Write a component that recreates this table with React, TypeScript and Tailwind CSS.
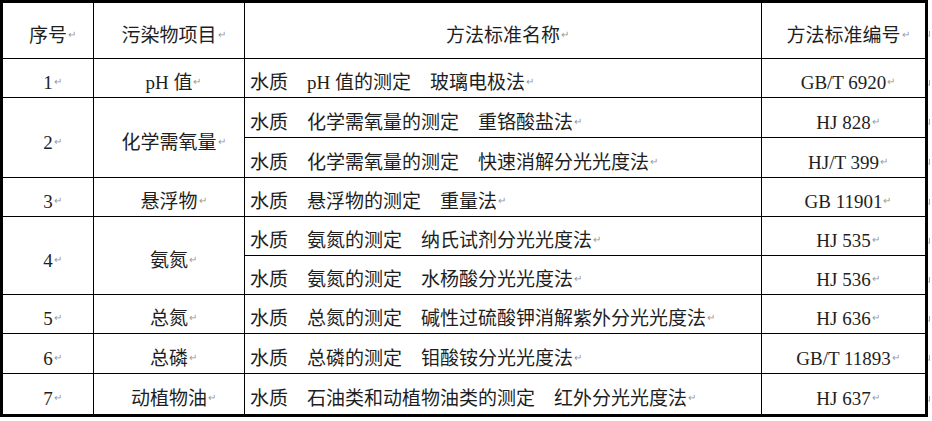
import type { ReactNode } from "react";

type Method = { name: string; code: string };

type Item = {
  no: string;
  item: string;
  methods: Method[];
};

const items: Item[] = [
  { no: "1", item: "pH 值", methods: [{ name: "水质　pH 值的测定　玻璃电极法", code: "GB/T 6920" }] },
  {
    no: "2",
    item: "化学需氧量",
    methods: [
      { name: "水质　化学需氧量的测定　重铬酸盐法", code: "HJ 828" },
      { name: "水质　化学需氧量的测定　快速消解分光光度法", code: "HJ/T 399" },
    ],
  },
  { no: "3", item: "悬浮物", methods: [{ name: "水质　悬浮物的测定　重量法", code: "GB 11901" }] },
  {
    no: "4",
    item: "氨氮",
    methods: [
      { name: "水质　氨氮的测定　纳氏试剂分光光度法", code: "HJ 535" },
      { name: "水质　氨氮的测定　水杨酸分光光度法", code: "HJ 536" },
    ],
  },
  { no: "5", item: "总氮", methods: [{ name: "水质　总氮的测定　碱性过硫酸钾消解紫外分光光度法", code: "HJ 636" }] },
  { no: "6", item: "总磷", methods: [{ name: "水质　总磷的测定　钼酸铵分光光度法", code: "GB/T 11893" }] },
  { no: "7", item: "动植物油", methods: [{ name: "水质　石油类和动植物油类的测定　红外分光光度法", code: "HJ 637" }] },
];

// row heights incl. the 1px rule below, used for the end-of-row marks
const markRows = [58, 39, 40, 40, 39, 39, 39, 39, 40, 41];

function Text({ children }: { children: ReactNode }) {
  return (
    <span className="relative whitespace-pre">
      {children}
      <span className="absolute left-full bottom-[5px] ml-[1px] text-[10px] leading-none text-[#9a9a9a]">
        ↵
      </span>
    </span>
  );
}

function Cell({
  children,
  left,
  span,
}: {
  children: ReactNode;
  left?: boolean;
  span?: boolean;
}) {
  return (
    <div
      className={
        "flex items-center bg-white pt-[9px] " +
        (left ? "justify-start pl-[5px] " : "justify-center ") +
        (span ? "row-span-2" : "")
      }
    >
      <Text>{children}</Text>
    </div>
  );
}

// the end-of-row mark that sits just outside the right border, mostly clipped
function RowMark() {
  return (
    <svg width="4" height="8" viewBox="0 0 4 8" className="block">
      <path d="M1.5 1v5M0.5 5.5l1 1.5" stroke="#a8a8a8" strokeWidth="1" fill="none" />
    </svg>
  );
}

export default function App() {
  return (
    <div className="flex w-[932px] h-[421px] bg-white text-[19px] leading-none text-[#1e1e1e] font-['Liberation_Serif','Noto_Sans_CJK_SC',serif]">
      <div className="grid w-[928px] h-[417px] grid-cols-[90px_150px_516px_163px] grid-rows-[55px_38px_39px_39px_38px_38px_38px_38px_39px_40px] gap-px bg-black border-[3px] border-black">
        <Cell>序号</Cell>
        <Cell>污染物项目</Cell>
        <Cell>方法标准名称</Cell>
        <Cell>方法标准编号</Cell>
        {items.map((it) => {
          const multi = it.methods.length > 1;
          return [
            <Cell key={it.no + "n"} span={multi}>
              {it.no}
            </Cell>,
            <Cell key={it.no + "i"} span={multi}>
              {it.item}
            </Cell>,
            ...it.methods.flatMap((m) => [
              <Cell key={m.code + "m"} left>
                {m.name}
              </Cell>,
              <Cell key={m.code + "c"}>{m.code}</Cell>,
            ]),
          ];
        })}
      </div>
      <div className="flex w-[4px] flex-col overflow-hidden">
        {markRows.map((h, i) => (
          <div key={i} style={{ height: h }} className="flex items-center pt-[10px]">
            <RowMark />
          </div>
        ))}
      </div>
    </div>
  );
}
